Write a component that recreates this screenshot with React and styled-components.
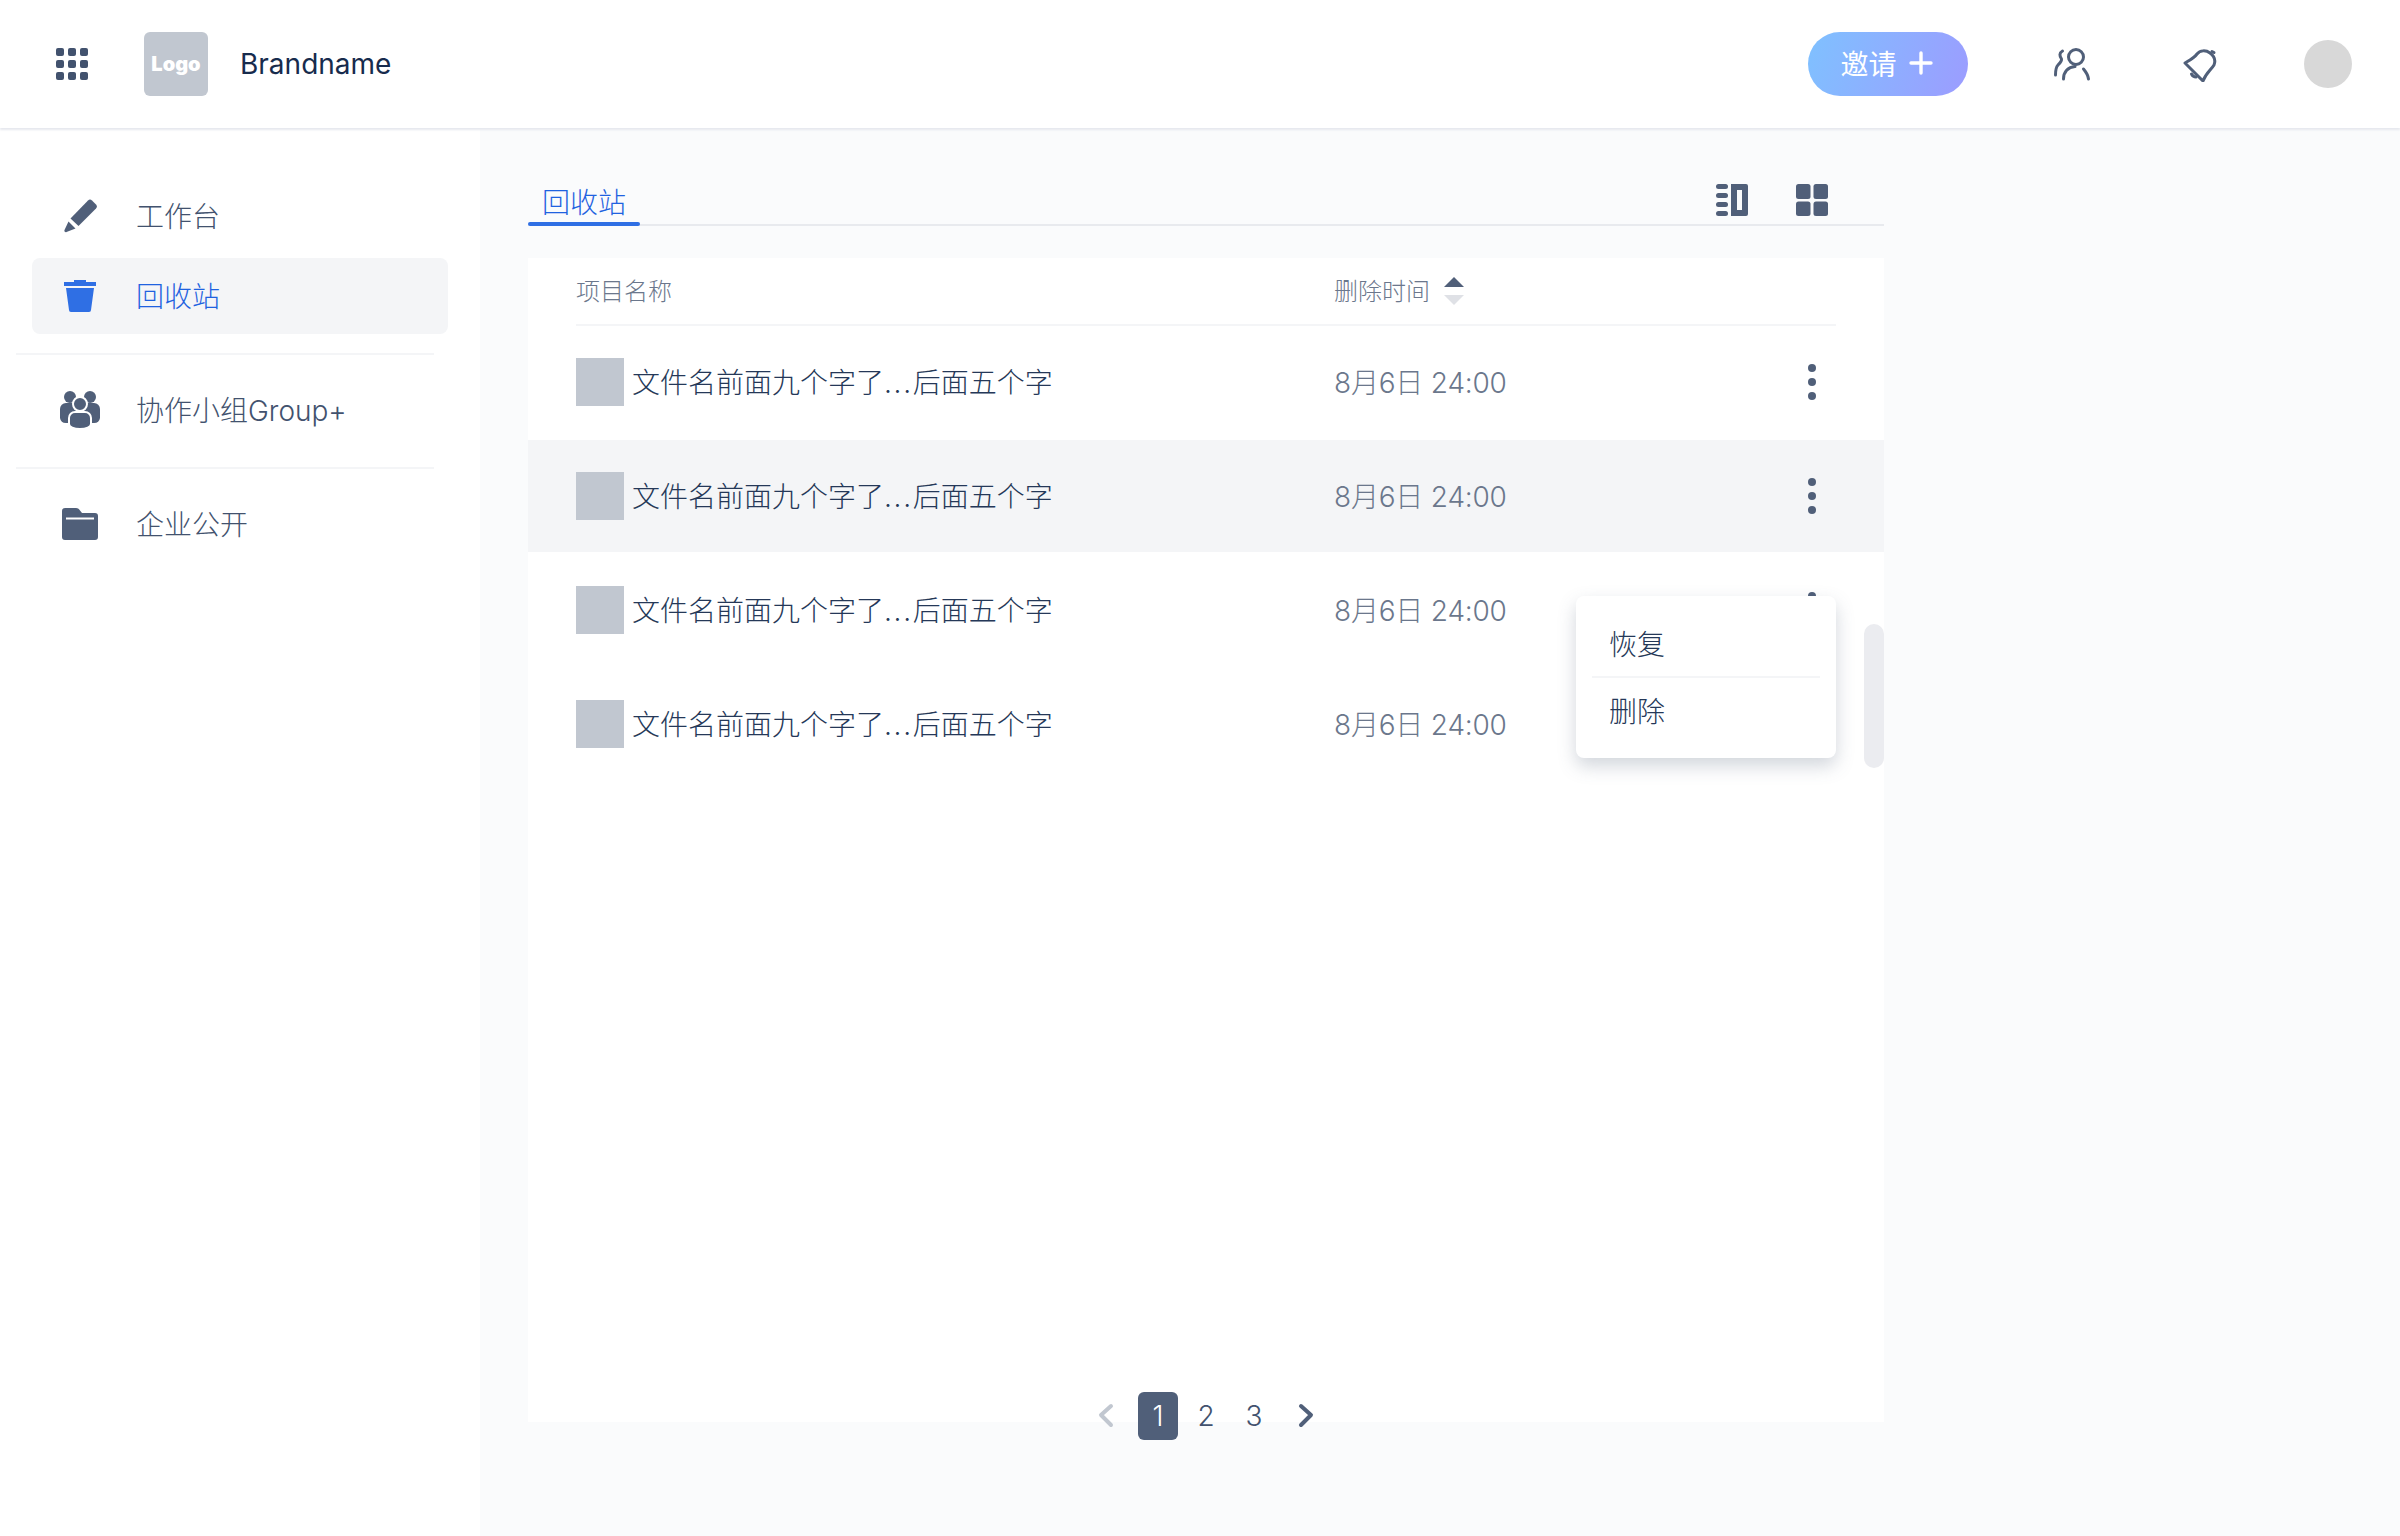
import React from "react";
import styled, { createGlobalStyle } from "styled-components";

const Global = createGlobalStyle`
  html, body { margin: 0; padding: 0; background: #fff; }
  body { font-family: Inter, "Noto Sans CJK SC", sans-serif; }
  * { box-sizing: border-box; }
`;

const Page = styled.div`
  width: 2400px;
  height: 1536px;
  display: flex;
  flex-direction: column;
  overflow: hidden;
  background: #fafbfc;
`;

const TopBar = styled.header`
  position: relative;
  z-index: 2;
  flex: none;
  height: 128px;
  display: flex;
  align-items: center;
  padding: 0 48px 0 56px;
  background: #fff;
  box-shadow: 0 2px 2px #e6e8ee;
`;

const AppGrid = styled.div`
  display: grid;
  grid-template-columns: repeat(3, 8px);
  grid-auto-rows: 8px;
  gap: 4px;
  margin-right: 56px;
  span { background: #42526e; border-radius: 2px; }
`;

const LogoMark = styled.div`
  width: 64px;
  height: 64px;
  border-radius: 6px;
  background: #c1c7d0;
  color: #fff;
  font-size: 20px;
  font-weight: 900;
  display: flex;
  align-items: center;
  justify-content: center;
  margin-right: 32px;
`;

const Brand = styled.div`
  font-size: 28px;
  color: #172b4d;
  flex: 1;
`;

const InviteButton = styled.button`
  width: 160px;
  height: 64px;
  border: 0;
  padding: 0 3px 2px 0;
  border-radius: 32px;
  background: linear-gradient(110deg, #7fc1ff 0%, #9c9cff 100%);
  color: #fff;
  font: 400 28px Inter, "Noto Sans CJK SC", sans-serif;
  display: flex;
  align-items: center;
  justify-content: center;
  gap: 12px;
  margin-right: 84px;
`;

const TopIcon = styled.svg`
  display: block;
  width: 40px;
  height: 36px;
  fill: none;
  stroke: #505f79;
  stroke-width: 3;
  stroke-linecap: round;
  stroke-linejoin: round;
  margin-right: ${(p) => p.$gap}px;
`;

const Avatar = styled.div`
  width: 48px;
  height: 48px;
  border-radius: 50%;
  background: #d8d8d8;
`;

const Body = styled.div`
  flex: 1;
  display: flex;
  min-height: 0;
`;

const Sidebar = styled.nav`
  flex: none;
  width: 480px;
  background: #fff;
  padding: 50px 0 0;
`;

const NavItem = styled.div`
  width: 416px;
  height: 76px;
  margin-left: 32px;
  margin-bottom: 4px;
  padding-bottom: 2px;
  border-radius: 8px;
  display: flex;
  align-items: center;
  background: ${(p) => (p.$active ? "#f4f5f7" : "transparent")};
  color: ${(p) => (p.$active ? "#1f62e0" : "#42526e")};
  font-size: 28px;
  font-weight: 300;
`;

const NavIconSlot = styled.span`
  width: 104px;
  padding-left: ${(p) => p.$inset}px;
  margin-top: 2px;
  flex: none;
  display: flex;
  svg { display: block; }
`;

const NavDivider = styled.div`
  width: 418px;
  height: 2px;
  background: #f4f5f7;
  margin: 19px 0 17px 16px;
`;

const Main = styled.main`
  flex: 1;
  padding: 36px 0 0 48px;
`;

const Column = styled.div`
  width: 1356px;
`;

const TabBar = styled.div`
  height: 62px;
  display: flex;
  align-items: flex-end;
  justify-content: space-between;
  border-bottom: 2px solid #e8eaee;
  padding-right: 56px;
  margin-bottom: 32px;
`;

const Tab = styled.div`
  position: relative;
  width: 112px;
  height: 60px;
  padding: 19px 0 0 14px;
  font-size: 28px;
  font-weight: 300;
  line-height: 40px;
  color: #1f62e0;
  &::after {
    content: "";
    position: absolute;
    left: 0;
    right: 0;
    bottom: -2px;
    height: 4px;
    border-radius: 2px;
    background: #2f6fe4;
  }
`;

const ViewIcons = styled.div`
  display: flex;
  gap: 48px;
  margin-bottom: 8px;
  svg { display: block; fill: #505f79; }
`;

const Card = styled.section`
  position: relative;
  height: 1164px;
  background: #fff;
`;

const HeadRow = styled.div`
  height: 68px;
  margin: 0 48px;
  border-bottom: 2px solid #f4f5f7;
  display: flex;
  align-items: center;
  font-size: 24px;
  font-weight: 300;
  color: #6b778c;
  padding-bottom: 4px;
`;

const NameCol = styled.div`
  width: 758px;
  flex: none;
  display: flex;
  align-items: center;
`;

const SortIcon = styled.svg`
  display: block;
  margin-left: 14px;
  margin-top: 4px;
`;

const Row = styled.div`
  height: 112px;
  margin-bottom: 2px;
  padding: 0 68px 0 48px;
  display: flex;
  align-items: center;
  background: ${(p) => (p.$hover ? "#f4f5f7" : "transparent")};
`;

const Thumb = styled.div`
  width: 48px;
  height: 48px;
  background: #c1c7d0;
  margin-right: 8px;
  flex: none;
`;

const FileName = styled.div`
  font-size: 28px;
  font-weight: 300;
  color: #253858;
  white-space: nowrap;
  padding-bottom: 2px;
`;

const Ellipsis = styled.span`
  letter-spacing: 1.7px;
`;

const DateText = styled.div`
  font-size: 28px;
  font-weight: 300;
  color: #6b778c;
  flex: 1;
  padding-bottom: 2px;
  letter-spacing: -0.2px;
`;

const Dots = styled.div`
  width: 8px;
  display: flex;
  flex-direction: column;
  gap: 6px;
  span { width: 8px; height: 8px; border-radius: 50%; background: #505f79; }
`;

const Menu = styled.div`
  position: absolute;
  z-index: 3;
  left: 1048px;
  top: 338px;
  width: 260px;
  height: 162px;
  border-radius: 8px;
  background: #fff;
  box-shadow: 0 8px 18px rgba(80, 95, 121, 0.26);
  padding: 16px 16px 0;
`;

const MenuItem = styled.div`
  height: 66px;
  padding: 0 0 3px 17px;
  display: flex;
  align-items: center;
  font-size: 28px;
  font-weight: 300;
  color: #253858;
  border-bottom: ${(p) => (p.$line ? "2px solid #f4f5f7" : "0")};
`;

const ScrollThumb = styled.div`
  position: absolute;
  z-index: 2;
  right: 0;
  top: 366px;
  width: 20px;
  height: 144px;
  border-radius: 10px;
  background: #ebecf0;
`;

const Pager = styled.div`
  position: absolute;
  left: 562px;
  top: 1134px;
  display: flex;
  gap: 8px;
`;

const PageCell = styled.div`
  width: 40px;
  height: 48px;
  border-radius: 6px;
  display: flex;
  align-items: center;
  justify-content: center;
  font-size: 28px;
  font-weight: 300;
  background: ${(p) => (p.$current ? "#505f79" : "transparent")};
  color: ${(p) => (p.$current ? "#fff" : "#42526e")};
  svg { display: block; fill: none; stroke-width: 4; stroke-linecap: round; stroke-linejoin: round; }
`;

const Files = [0, 1, 2, 3];

export default function App() {
  return (
    <Page>
      <Global />
      <TopBar>
        <AppGrid>
          {Array.from({ length: 9 }, (_, i) => <span key={i} />)}
        </AppGrid>
        <LogoMark>Logo</LogoMark>
        <Brand>Brandname</Brand>
        <InviteButton>
          邀请
          <svg width="24" height="24" viewBox="0 0 24 24" fill="none" stroke="#fff" strokeWidth="3.4" strokeLinecap="round">
            <path d="M2 12h20M12 2v20" />
          </svg>
        </InviteButton>
        <TopIcon $gap={88} viewBox="0 0 40 36">
          <circle cx="24" cy="11" r="7.5" />
          <path d="M11.5 33C11.5 26 16 21 23 20.5" />
          <path d="M31.5 23C34 26 36 29 36.5 33" />
          <path d="M10.5 5C7 7 7.5 10 9.5 13C10 15 8 17 6 19C4 21 3.5 24 3.5 29" />
        </TopIcon>
        <TopIcon $gap={84} viewBox="0 0 40 36">
          <path d="M5 17C10 14 14 12 17 8C20 4 26 4 30 7C34 10 36 14 34 19C31 24 26 27 23 35Z" />
          <path d="M32 5.5L34 6.5" />
          <path d="M11.5 28C12.5 30 14 31 16 31" />
        </TopIcon>
        <Avatar />
      </TopBar>
      <Body>
        <Sidebar>
          <NavItem>
            <NavIconSlot $inset={32}>
              <svg width="34" height="34" viewBox="0 0 34 34" fill="#505f79">
                <path d="M24 1.5a3 3 0 0 1 4 0L32 5.500a3 3 0 0 1 0 4L14.500 27L6.500 19.500Z" />
                <path d="M4.500 22.500L11.500 29.500L2.500 33a1.500 1.500 0 0 1-2-2Z" />
              </svg>
            </NavIconSlot>
            工作台
          </NavItem>
          <NavItem $active>
            <NavIconSlot $inset={32}>
              <svg width="32" height="32" viewBox="0 0 32 32" fill="#2f6fe4">
                <path d="M10 0h12v2h10v4H0V2h10Z" />
                <path d="M2 8h28l-3 22a2 2 0 0 1-2 2H7a2 2 0 0 1-2-2Z" />
              </svg>
            </NavIconSlot>
            回收站
          </NavItem>
          <NavDivider />
          <NavItem>
            <NavIconSlot $inset={28}>
              <svg width="40" height="40" viewBox="0 0 40 40" fill="#505f79">
                <circle cx="10" cy="7" r="6" />
                <circle cx="30" cy="7" r="6" />
                <path d="M0 19a6 6 0 0 1 6-6h28a6 6 0 0 1 6 6v9a6 6 0 0 1-6 5H6a6 6 0 0 1-6-5Z" />
                <circle cx="20" cy="14" r="7" stroke="#fff" strokeWidth="2" />
                <path d="M9 28a6 6 0 0 1 6-6h10a6 6 0 0 1 6 6v6c0 3-5 5-11 5s-11-2-11-5Z" stroke="#fff" strokeWidth="2" />
              </svg>
            </NavIconSlot>
            协作小组Group+
          </NavItem>
          <NavDivider />
          <NavItem>
            <NavIconSlot $inset={30}>
              <svg width="36" height="32" viewBox="0 0 36 32" fill="#505f79">
                <path d="M3 0h11c2 0 3 1 4 2.500L20 5h13a3 3 0 0 1 3 3v21a3 3 0 0 1-3 3H3a3 3 0 0 1-3-3V3a3 3 0 0 1 3-3Z" />
                <rect x="4" y="9.500" width="28" height="2" fill="#fff" />
              </svg>
            </NavIconSlot>
            企业公开
          </NavItem>
        </Sidebar>
        <Main>
          <Column>
            <TabBar>
              <Tab>回收站</Tab>
              <ViewIcons>
                <svg width="32" height="32" viewBox="0 0 32 32">
                  <rect x="0" y="0" width="12" height="5" rx="2.500" />
                  <rect x="0" y="9" width="12" height="5" rx="2.500" />
                  <rect x="0" y="18" width="12" height="5" rx="2.500" />
                  <rect x="0" y="27" width="12" height="5" rx="2.500" />
                  <path fillRule="evenodd" d="M15 0h15a2 2 0 0 1 2 2v28a2 2 0 0 1-2 2H15ZM21 6v20h5V6Z" />
                </svg>
                <svg width="32" height="32" viewBox="0 0 32 32">
                  <rect x="0" y="0" width="14.500" height="15" rx="2.500" />
                  <rect x="17.500" y="0" width="14.500" height="15" rx="2.500" />
                  <rect x="0" y="17.500" width="14.500" height="14.500" rx="2.500" />
                  <rect x="17.500" y="17.500" width="14.500" height="14.500" rx="2.500" />
                </svg>
              </ViewIcons>
            </TabBar>
            <Card>
              <HeadRow>
                <NameCol>项目名称</NameCol>
                删除时间
                <SortIcon width="20" height="28" viewBox="0 0 20 28">
                  <path d="M10 0L20 10H0Z" fill="#505f79" />
                  <path d="M0 18H20L10 28Z" fill="#dfe1e6" />
                </SortIcon>
              </HeadRow>
              {Files.map((i) => (
                <Row key={i} $hover={i === 1}>
                  <NameCol>
                    <Thumb />
                    <FileName>文件名前面九个字了<Ellipsis>...</Ellipsis>后面五个字</FileName>
                  </NameCol>
                  <DateText>8月6日 24:00</DateText>
                  <Dots><span /><span /><span /></Dots>
                </Row>
              ))}
              <Menu>
                <MenuItem $line>恢复</MenuItem>
                <MenuItem>删除</MenuItem>
              </Menu>
              <ScrollThumb />
              <Pager>
                <PageCell>
                  <svg width="40" height="28" viewBox="0 0 40 28" stroke="#c1c7d0">
                    <path d="M21 4L11 13L21 23" />
                  </svg>
                </PageCell>
                <PageCell $current>1</PageCell>
                <PageCell>2</PageCell>
                <PageCell>3</PageCell>
                <PageCell>
                  <svg width="40" height="28" viewBox="0 0 40 28" stroke="#505f79">
                    <path d="M19 4L29 13L19 23" />
                  </svg>
                </PageCell>
              </Pager>
            </Card>
          </Column>
        </Main>
      </Body>
    </Page>
  );
}
